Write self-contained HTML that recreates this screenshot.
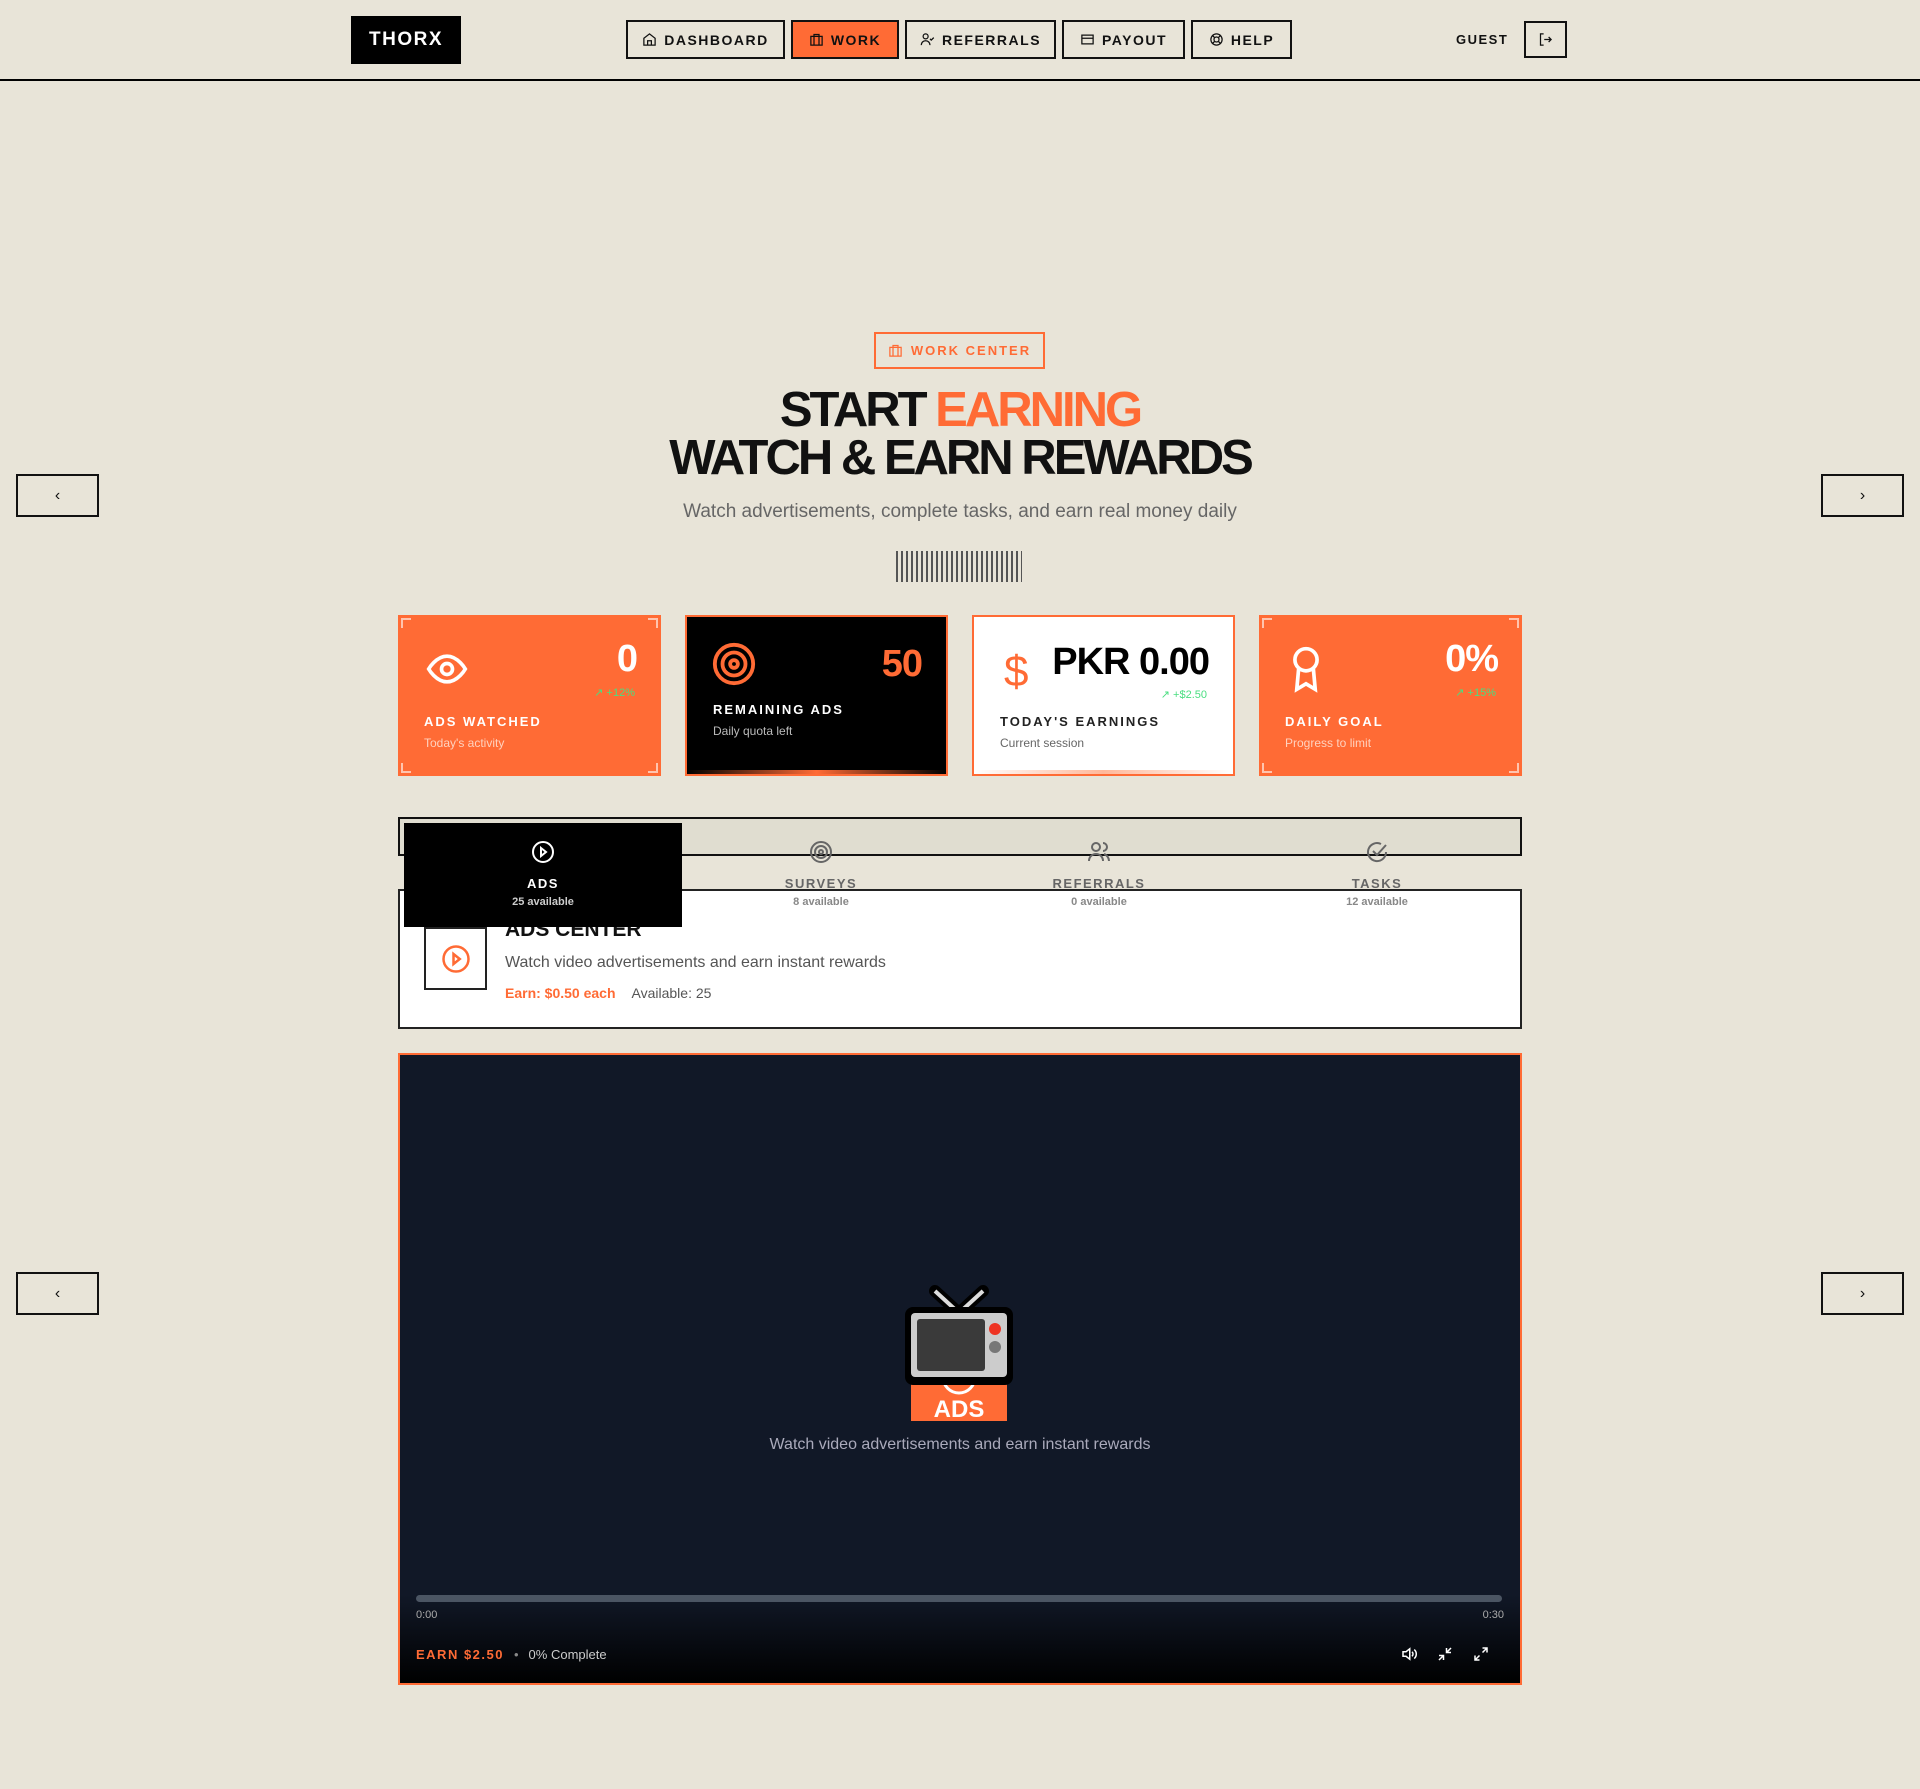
<!DOCTYPE html>
<html><head><meta charset="utf-8"><style>
*{box-sizing:border-box;margin:0;padding:0}
body{width:1920px;height:1789px;background:#e8e4d8;font-family:"Liberation Sans",sans-serif;position:relative;overflow:hidden;color:#111}
.a{position:absolute}
.hdr{left:0;top:0;width:1920px;height:81px;border-bottom:2px solid #000}
.logo{left:351px;top:16px;width:110px;height:48px;background:#000;color:#fff;font-weight:900;font-size:19px;letter-spacing:1.5px;display:flex;align-items:center;justify-content:center}
.nb{top:20px;height:39px;border:2px solid #111;display:flex;align-items:center;justify-content:center;gap:7px;font-size:14px;font-weight:700;letter-spacing:1.5px;color:#111}
.nb svg{width:15px;height:15px}
.arr{width:83px;height:43px;border:2px solid #111;display:flex;align-items:center;justify-content:center;font-size:16px}
.card{top:615px;width:263px;height:161px}
.cn{position:absolute;width:10px;height:10px;border-color:rgba(255,255,255,.6);border-style:solid;border-width:0}
.val{position:absolute;right:24px;font-weight:900;font-size:38px;letter-spacing:-1px}
.chg{position:absolute;right:26px;top:71px;font-size:11px;color:#4ade80}
.lab{position:absolute;left:26px;font-size:13px;font-weight:700;letter-spacing:2px}
.sub{position:absolute;left:26px;font-size:12px}
.tab{position:absolute;top:840px;width:278px;text-align:center;color:#666}
.tab .t{font-size:13px;font-weight:700;letter-spacing:1.5px;margin-top:7px}
.tab .s{font-size:11px;font-weight:700;color:#888;margin-top:5px}
</style></head><body>
<div class="a hdr"></div>
<div class="a logo">THORX</div>
<div class="a nb" style="left:626px;width:159px"><svg viewBox="0 0 24 24" fill="none" stroke="#111" stroke-width="2"><path d="M3 10l9-7 9 7v11H3z M9 21v-7h6v7"/></svg>DASHBOARD</div>
<div class="a nb" style="left:791px;width:108px;background:#ff6b35"><svg viewBox="0 0 24 24" fill="none" stroke="#111" stroke-width="2"><rect x="3" y="7" width="18" height="14"/><path d="M8 7V4h8v3M8 7v14M16 7v14"/></svg>WORK</div>
<div class="a nb" style="left:905px;width:151px"><svg viewBox="0 0 24 24" fill="none" stroke="#111" stroke-width="2"><circle cx="9" cy="7" r="4"/><path d="M2 21c0-4 3-7 7-7s7 3 7 7M16 11l2 2 4-4"/></svg>REFERRALS</div>
<div class="a nb" style="left:1062px;width:123px"><svg viewBox="0 0 24 24" fill="none" stroke="#111" stroke-width="2"><rect x="3" y="5" width="18" height="14"/><path d="M3 10h18"/></svg>PAYOUT</div>
<div class="a nb" style="left:1191px;width:101px"><svg viewBox="0 0 24 24" fill="none" stroke="#111" stroke-width="2"><circle cx="12" cy="12" r="9"/><circle cx="12" cy="12" r="4"/><path d="M5 5l4 4M15 15l4 4M19 5l-4 4M9 15l-4 4"/></svg>HELP</div>
<div class="a" style="left:1456px;top:32px;font-size:13px;font-weight:700;letter-spacing:1.5px">GUEST</div>
<div class="a" style="left:1524px;top:21px;width:43px;height:37px;border:2px solid #111;display:flex;align-items:center;justify-content:center"><svg width="15" height="15" viewBox="0 0 24 24" fill="none" stroke="#111" stroke-width="2"><path d="M9 3H4v18h5M10 12h11M17 8l4 4-4 4"/></svg></div>

<div class="a arr" style="left:16px;top:474px">‹</div>
<div class="a arr" style="left:1821px;top:474px">›</div>
<div class="a arr" style="left:16px;top:1272px">‹</div>
<div class="a arr" style="left:1821px;top:1272px">›</div>

<div class="a" style="left:874px;top:332px;width:171px;height:37px;border:2px solid #ff6b35;color:#ff6b35;display:flex;align-items:center;justify-content:center;gap:8px;font-size:13px;font-weight:700;letter-spacing:2px"><svg width="15" height="15" viewBox="0 0 24 24" fill="none" stroke="#ff6b35" stroke-width="2"><rect x="3" y="7" width="18" height="14"/><path d="M8 7V4h8v3M8 7v14M16 7v14"/></svg>WORK CENTER</div>
<div class="a" style="left:0;width:1920px;top:386px;text-align:center;font-size:49px;font-weight:900;letter-spacing:-3px;line-height:48px">START <span style="color:#ff6b35">EARNING</span><br>WATCH &amp; EARN REWARDS</div>
<div class="a" style="left:0;width:1920px;top:501px;text-align:center;font-size:19px;color:#666">Watch advertisements, complete tasks, and earn real money daily</div>
<div class="a" style="left:896px;top:551px;width:126px;height:31px;background:repeating-linear-gradient(90deg,#555 0 2px,transparent 2px 5px)"></div>

<!-- cards -->
<div class="a card" style="left:398px;background:#ff6b35;color:#fff">
<div class="cn" style="left:3px;top:3px;border-left-width:2px;border-top-width:2px"></div><div class="cn" style="right:3px;top:3px;border-right-width:2px;border-top-width:2px"></div><div class="cn" style="left:3px;bottom:3px;border-left-width:2px;border-bottom-width:2px"></div><div class="cn" style="right:3px;bottom:3px;border-right-width:2px;border-bottom-width:2px"></div>
<svg class="a" style="left:26px;top:32px" width="46" height="44" viewBox="0 0 24 24" fill="none" stroke="#fff" stroke-width="2"><path d="M2 12s4-7 10-7 10 7 10 7-4 7-10 7S2 12 2 12z"/><circle cx="12" cy="12" r="3"/></svg>
<div class="val" style="top:23px">0</div><div class="chg">↗ +12%</div>
<div class="lab" style="top:99px">ADS WATCHED</div><div class="sub" style="top:121px;color:#ffd2bf">Today's activity</div></div>

<div class="a card" style="left:685px;background:#000;border:2px solid #ff6b35;color:#fff">
<svg class="a" style="left:24px;top:24px" width="46" height="46" viewBox="0 0 24 24" fill="none" stroke="#ff6b35" stroke-width="2"><circle cx="12" cy="12" r="10"/><circle cx="12" cy="12" r="6"/><circle cx="12" cy="12" r="2"/></svg>
<div class="val" style="top:26px;color:#ff6b35">50</div>
<div class="lab" style="top:85px">REMAINING ADS</div><div class="sub" style="top:107px;color:#bbb">Daily quota left</div>
<div class="a" style="left:0;right:0;bottom:0;height:4px;background:linear-gradient(90deg,#000,#ff6b35,#000)"></div></div>

<div class="a card" style="left:972px;background:#fff;border:2px solid #ff6b35">
<div class="a" style="left:30px;top:30px;color:#ff6b35;font-size:44px">$</div>
<div class="val" style="top:24px;color:#000">PKR 0.00</div><div class="chg">↗ +$2.50</div>
<div class="lab" style="top:97px;color:#222">TODAY'S EARNINGS</div><div class="sub" style="top:119px;color:#666">Current session</div>
<div class="a" style="left:0;right:0;bottom:0;height:4px;background:linear-gradient(90deg,#fff,#ffb89a,#fff)"></div></div>

<div class="a card" style="left:1259px;background:#ff6b35;color:#fff">
<div class="cn" style="left:3px;top:3px;border-left-width:2px;border-top-width:2px"></div><div class="cn" style="right:3px;top:3px;border-right-width:2px;border-top-width:2px"></div><div class="cn" style="left:3px;bottom:3px;border-left-width:2px;border-bottom-width:2px"></div><div class="cn" style="right:3px;bottom:3px;border-right-width:2px;border-bottom-width:2px"></div>
<svg class="a" style="left:32px;top:30px" width="30" height="48" viewBox="0 0 16 26" fill="none" stroke="#fff" stroke-width="2"><circle cx="8" cy="8" r="6"/><path d="M4 13l-1 11 5-3 5 3-1-11"/></svg>
<div class="val" style="top:23px">0%</div><div class="chg">↗ +15%</div>
<div class="lab" style="top:99px">DAILY GOAL</div><div class="sub" style="top:121px;color:#ffd2bf">Progress to limit</div></div>

<!-- tabs -->
<div class="a" style="left:398px;top:817px;width:1124px;height:39px;border:2px solid #111;background:#e0ddd0"></div>
<div class="a" style="left:398px;top:889px;width:1124px;height:140px;border:2px solid #222;background:#fff"></div>
<div class="a" style="left:424px;top:927px;width:63px;height:63px;border:2px solid #222;display:flex;align-items:center;justify-content:center"><svg width="30" height="30" viewBox="0 0 24 24" fill="none" stroke="#ff6b35" stroke-width="2"><circle cx="12" cy="12" r="10"/><path d="M10 8l5 4-5 4z"/></svg></div>
<div class="a" style="left:505px;top:918px;font-size:21px;font-weight:700">ADS CENTER</div>
<div class="a" style="left:505px;top:954px;font-size:16px;color:#555">Watch video advertisements and earn instant rewards</div>
<div class="a" style="left:505px;top:985px;font-size:14px"><span style="color:#ff6b35;font-weight:700">Earn: $0.50 each</span><span style="color:#555;margin-left:16px">Available: 25</span></div>
<div class="a" style="left:404px;top:823px;width:278px;height:104px;background:#000"></div>
<div class="tab" style="left:404px;color:#fff"><svg width="24" height="24" viewBox="0 0 24 24" fill="none" stroke="#fff" stroke-width="2"><circle cx="12" cy="12" r="10"/><path d="M10 8l5 4-5 4z"/></svg><div class="t">ADS</div><div class="s" style="color:#ccc">25 available</div></div>
<div class="tab" style="left:682px"><svg width="24" height="24" viewBox="0 0 24 24" fill="none" stroke="#666" stroke-width="2"><circle cx="12" cy="12" r="10"/><circle cx="12" cy="12" r="6"/><circle cx="12" cy="12" r="2"/></svg><div class="t">SURVEYS</div><div class="s">8 available</div></div>
<div class="tab" style="left:960px"><svg width="24" height="24" viewBox="0 0 24 24" fill="none" stroke="#666" stroke-width="2"><circle cx="9" cy="7" r="4"/><path d="M2 21c0-4 3-7 7-7s7 3 7 7M16 3a4 4 0 010 8M22 21c0-3-2-6-5-7"/></svg><div class="t">REFERRALS</div><div class="s">0 available</div></div>
<div class="tab" style="left:1238px"><svg width="24" height="24" viewBox="0 0 24 24" fill="none" stroke="#666" stroke-width="2"><path d="M21 12a9 9 0 11-5-8"/><path d="M8 11l4 4 9-10"/></svg><div class="t">TASKS</div><div class="s">12 available</div></div>

<!-- video -->
<div class="a" style="left:398px;top:1053px;width:1124px;height:632px;border:2px solid #ff6b35;background:linear-gradient(180deg,#111827 0,#111827 86%,#000 100%)">
<svg class="a" style="left:503px;top:226px" width="112" height="142" viewBox="0 0 112 142">
<rect x="8" y="96" width="96" height="44" fill="#ff6b35"/>
<circle cx="56" cy="96" r="16" fill="none" stroke="#fff" stroke-width="3"/>
<text x="56" y="136" text-anchor="middle" fill="#fff" font-family="Liberation Sans" font-weight="700" font-size="24">ADS</text>
<path d="M32 10l24 22 24-22" stroke="#000" stroke-width="12" fill="none" stroke-linecap="round"/>
<path d="M32 10l24 22 24-22" stroke="#ddd" stroke-width="4" fill="none"/>
<rect x="2" y="26" width="108" height="78" rx="8" fill="#000"/>
<rect x="8" y="32" width="96" height="64" rx="4" fill="#ccc"/>
<rect x="14" y="38" width="68" height="52" rx="3" fill="#3a3a3a"/>
<circle cx="92" cy="48" r="6" fill="#ee3322"/><circle cx="92" cy="66" r="6" fill="#777"/>
</svg>
<div class="a" style="left:0;width:1120px;top:381px;text-align:center;font-size:16px;color:#aab">Watch video advertisements and earn instant rewards</div>
<div class="a" style="left:16px;top:540px;width:1086px;height:7px;border-radius:4px;background:#4b5563"></div>
<div class="a" style="left:16px;top:554px;font-size:11px;color:#aaa">0:00</div>
<div class="a" style="right:16px;top:554px;font-size:11px;color:#aaa">0:30</div>
<div class="a" style="left:16px;top:592px;font-size:13px"><span style="color:#ff6b35;font-weight:700;letter-spacing:1.5px">EARN $2.50</span><span style="color:#888;margin:0 10px">•</span><span style="color:#ccc">0% Complete</span></div>
<div class="a" style="right:30px;top:590px;display:flex;gap:18px"><svg width="18" height="18" viewBox="0 0 24 24" fill="none" stroke="#fff" stroke-width="2"><path d="M4 9h4l5-4v14l-5-4H4z M16 9a4 4 0 010 6M19 6a8 8 0 010 12"/></svg><svg width="18" height="18" viewBox="0 0 24 24" fill="none" stroke="#fff" stroke-width="2"><path d="M4 20l6-6M4 14h6v6M20 4l-6 6M14 4v6h6"/></svg><svg width="18" height="18" viewBox="0 0 24 24" fill="none" stroke="#fff" stroke-width="2"><path d="M14 10l6-6M14 4h6v6M10 14l-6 6M4 14v6h6"/></svg></div>
</div>
</body></html>
